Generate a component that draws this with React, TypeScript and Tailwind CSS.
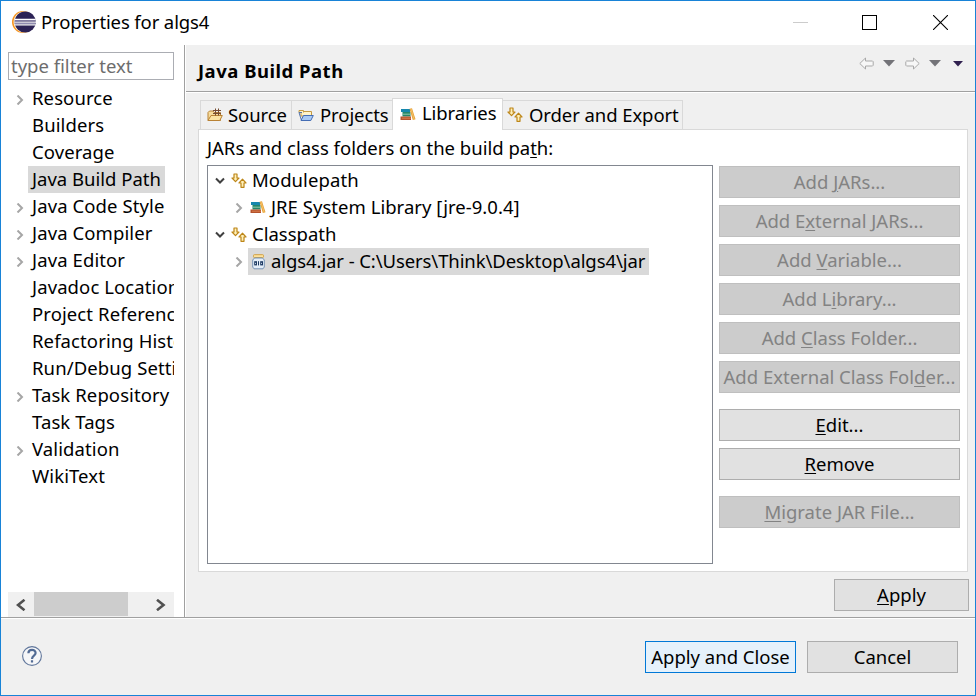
import React from "react";

type Item = { label: string; arrow?: boolean; selected?: boolean };

const categories: Item[] = [
  { label: "Resource", arrow: true },
  { label: "Builders" },
  { label: "Coverage" },
  { label: "Java Build Path", selected: true },
  { label: "Java Code Style", arrow: true },
  { label: "Java Compiler", arrow: true },
  { label: "Java Editor", arrow: true },
  { label: "Javadoc Location" },
  { label: "Project References" },
  { label: "Refactoring History" },
  { label: "Run/Debug Settings" },
  { label: "Task Repository", arrow: true },
  { label: "Task Tags" },
  { label: "Validation", arrow: true },
  { label: "WikiText" },
];

function Chevron({ open = false }: { open?: boolean }) {
  return open ? (
    <svg width="10" height="8" viewBox="0 0 10 8" fill="none" stroke="#404040" strokeWidth="2">
      <path d="M1 1.5 5 5.5 9 1.5" />
    </svg>
  ) : (
    <svg width="8" height="10" viewBox="0 0 8 10" fill="none" stroke="#a6a6a6" strokeWidth="2">
      <path d="M1.5 .5 6 5 1.5 9.5" />
    </svg>
  );
}

function EclipseLogo() {
  return (
    <svg width="24" height="22" viewBox="0 0 24 22">
      <circle cx="11" cy="11" r="11" fill="#f7941e" />
      <circle cx="12.2" cy="11" r="10.6" fill="#fff3df" />
      <circle cx="13.2" cy="11" r="10.6" fill="#2c2255" />
      <path d="M3 8.5H23.6M2.5 11.2H24M3 13.9H23.6" stroke="#fff" strokeWidth="1.3" />
      <path d="M3 9.8H23.6M3 12.5H23.6" stroke="#8f8bb0" strokeWidth="1" />
    </svg>
  );
}

function SourceIcon() {
  return (
    <svg width="16" height="14" viewBox="0 0 16 14">
      <path d="M1 12.5V4.5L2.5 3H6L7 4.5H13.5V12.5Z" fill="#f6dc9c" stroke="#b98235" />
      <path d="M1 12.5 4 7.5H15.3L12.8 12.5Z" fill="#fbe3a2" stroke="#b98235" />
      <path d="M6 2.5H14M6 5.5H14M8.5 0.5V7.5M11.5 0.5V7.5" stroke="#754c32" />
    </svg>
  );
}

function ProjectsIcon() {
  return (
    <svg width="16" height="14" viewBox="0 0 16 14">
      <path d="M1 4.5V2.5H5.5V4.5M5.5 3.5H13.5V8H3V4.5" fill="#fff4ca" stroke="#c49a42" />
      <path d="M1 4.5 3.5 12.5M1 4.5H4" stroke="#5473a8" fill="none" />
      <path d="M3 12.5 5.5 7.5H15.3L12.8 12.5Z" fill="#a8c9f4" stroke="#456db4" />
    </svg>
  );
}

function BooksIcon() {
  return (
    <svg width="16" height="13" viewBox="0 0 16 13">
      <rect x="1" y="1" width="9" height="3" fill="#1687ad" />
      <rect x="2.5" y="4" width="8" height="4.5" fill="#24866a" />
      <path d="M3 6.2H10" stroke="#91c9a9" />
      <rect x="0.5" y="8.5" width="10.5" height="3.5" fill="#b4532c" />
      <path d="M2 10.2H11" stroke="#d97f4f" />
      <path d="M9.5 0.8 12 0.3 15.5 11.3 12.8 12Z" fill="#e7a23b" />
      <path d="M11 1 14.2 11.5" stroke="#f8ca72" strokeWidth=".8" />
    </svg>
  );
}

function OrderIcon() {
  return (
    <svg width="16" height="16" viewBox="0 0 16 16" fill="#fff0b9" stroke="#bd8618" strokeWidth="1.2" strokeLinejoin="round">
      <path d="M3 1H6V5H8L4.5 8.7 1 5H3Z" />
      <path d="M11.5 6.2 15 10H13V14.3H10V10H8Z" />
    </svg>
  );
}

function JarIcon() {
  return (
    <svg width="13" height="16" viewBox="0 0 13 16">
      <rect x="1.5" y=".7" width="10" height="2.8" rx=".8" fill="#ffe29b" stroke="#d0a143" />
      <path d="M2.5 4H10.5L12.3 6V13L11 14.8H2L.7 13V6Z" fill="#e3edf8" stroke="#7894b5" />
      <rect x="2.7" y="7.7" width="1.8" height="3.2" fill="none" stroke="#1d3a63" />
      <path d="M6.5 7.2V11.4" stroke="#1d3a63" />
      <rect x="8.7" y="7.7" width="1.8" height="3.2" fill="none" stroke="#1d3a63" />
    </svg>
  );
}

function NavArrow({ flip = false }: { flip?: boolean }) {
  return (
    <svg width="15" height="13" viewBox="0 0 15 13" className={flip ? "-scale-x-100" : ""}>
      <path d="M.8 6.5 6.5 1V4H13.5L14.2 4.7V8.3L13.5 9H6.5V12Z" fill="#f7f7f7" stroke="#a9a9a9" strokeLinejoin="round" />
    </svg>
  );
}

function Caret({ small = false }: { small?: boolean }) {
  return small ? (
    <svg width="10" height="6" viewBox="0 0 10 6"><path d="M0 0H10L5 5.5Z" fill="#30204f" /></svg>
  ) : (
    <svg width="12" height="7" viewBox="0 0 12 7"><path d="M0 0H12L6 6.5Z" fill="#737378" /></svg>
  );
}

/* Dialog button; `hot` is the underlined mnemonic letter between `pre` and `post`. */
function Btn({ pre = "", hot = "", post, kind = "normal", className = "" }: {
  pre?: string; hot?: string; post: string; kind?: "normal" | "disabled" | "primary"; className?: string;
}) {
  const look = {
    normal: "border-[#adadad] bg-[#e1e1e1] text-black",
    disabled: "border-[#bfbfbf] bg-[#cccccc] text-[#838383]",
    primary: "border-[#0078d7] bg-[#e5f1fb] text-black",
  }[kind];
  return (
    <button className={`flex h-8 shrink-0 items-center justify-center border pb-px whitespace-pre ${look} ${className}`}>
      <span>{pre}<u className="decoration-1 underline-offset-2">{hot}</u>{post}</span>
    </button>
  );
}

export default function App() {
  return (
    <div className="flex h-[696px] w-[976px] flex-col overflow-hidden border border-[#1883d7] bg-[#f0f0f0] font-['Noto_Sans',sans-serif] text-[18.5px] leading-[27px] text-black">
      <header className="flex h-11 shrink-0 items-center bg-white pl-[11px]">
        <span className="pb-0.5"><EclipseLogo /></span>
        <span className="ml-[5px] pb-[3px] tracking-[-0.12px] whitespace-pre">Properties for algs4</span>
        <div className="ml-auto flex items-center pr-[27px] pb-px">
          <div className="h-px w-[15px] bg-[#cccccc]" />
          <div className="ml-[54px] size-[15px] border border-black" />
          <svg className="ml-[56px]" width="15" height="15" viewBox="0 0 15 15" stroke="#000" strokeWidth="1.1"><path d="M0 0 15 15M15 0 0 15" /></svg>
        </div>
      </header>

      <main className="flex h-[572px] shrink-0">
        <aside className="flex w-[183px] shrink-0 flex-col bg-white pt-[7px] pr-[10px] pl-[7px]">
          <div className="h-7 shrink-0 border border-[#abadb3] pl-0.5 leading-[25px] text-[#6d6d6d]">type filter text</div>
          <ul className="mt-[5px] overflow-hidden">
            {categories.map((c) => (
              <li key={c.label} className="flex h-[27px] items-center whitespace-pre">
                <span className="flex w-5 shrink-0 justify-center pt-0.5 pl-1"> {c.arrow && <Chevron />}</span>
                <span className={`h-[27px] shrink-0 px-1 leading-[25px] ${c.selected ? "bg-[#d9d9d9]" : "tracking-[0.1px]"}`}>{c.label}</span>
              </li>
            ))}
          </ul>
          <div className="mt-auto flex h-[25px] items-center bg-[#f0f0f0]">
            <svg className="ml-2" width="10" height="12" viewBox="0 0 10 12" fill="none" stroke="#505050" strokeWidth="2.6"><path d="M8.5 .8 2 6 8.5 11.2" /></svg>
            <div className="mb-px ml-2 h-6 w-[94px] bg-[#cdcdcd]" />
            <svg className="ml-7" width="10" height="12" viewBox="0 0 10 12" fill="none" stroke="#505050" strokeWidth="2.6"><path d="M1 .8 7.5 6 1 11.2" /></svg>
          </div>
        </aside>
        <div className="w-0.5 shrink-0 border-l border-[#a0a0a0] bg-white" />

        <section className="flex flex-1 flex-col">
          <div className="flex h-[47px] shrink-0 items-start border-b border-b-[#a0a0a0] pr-3">
            <h1 className="mt-3 ml-3 font-bold tracking-[0.5px] whitespace-pre">Java Build Path</h1>
            <div className="mt-3 ml-auto flex h-[13px] items-center">
              <NavArrow />
              <span className="ml-[9px]"><Caret /></span>
              <span className="ml-[10px]"><NavArrow flip /></span>
              <span className="ml-[9px]"><Caret /></span>
              <span className="ml-3"><Caret small /></span>
            </div>
          </div>
          <div className="h-px shrink-0 bg-white" />

          <nav className="mt-[5px] ml-[14px] flex h-8 shrink-0 items-end tracking-[-0.08px] whitespace-pre">
            <div className="mb-px flex h-[29px] w-[92px] items-center border border-b-0 border-[#d9d9d9] pl-1.5">
              <SourceIcon /><span className="ml-[5px] pb-0.5">Source</span>
            </div>
            <div className="mb-px flex h-[29px] w-[100px] items-center border-t border-[#d9d9d9] pl-1.5">
              <ProjectsIcon /><span className="ml-[6px] pb-0.5">Projects</span>
            </div>
            <div className="relative z-10 flex h-8 w-[111px] items-center border border-b-0 border-[#d9d9d9] bg-white pl-[7px]">
              <BooksIcon /><span className="ml-1.5 pb-1">Libraries</span>
            </div>
            <div className="mb-px flex h-[29px] w-[180px] items-center border-t border-r border-[#d9d9d9] pl-[4px]">
              <OrderIcon /><span className="ml-[6px] pb-0.5">Order and Export</span>
            </div>
          </nav>

          <div className="-mt-px ml-3 flex h-[443px] w-[770px] shrink-0 border border-[#d9d9d9] bg-white pl-2">
            <div className="w-[506px] shrink-0">
              <p className="mt-[5px] h-[30px] leading-[25px] whitespace-pre">JARs and class folders on the build pa<u className="decoration-1 underline-offset-2">t</u>h:</p>
              <div className="h-[399px] border border-[#828790] whitespace-pre">
                <div className="mt-px flex h-[27px] items-center pl-[7px]">
                  <Chevron open /><span className="ml-1.5"><OrderIcon /></span><span className="ml-[5px] pb-0.5 tracking-[0.08px]">Modulepath</span>
                </div>
                <div className="flex h-[27px] items-center pl-[27px]">
                  <Chevron /><span className="ml-[7px]"><BooksIcon /></span><span className="ml-[5px] pb-0.5 tracking-[0.03px]">JRE System Library [jre-9.0.4]</span>
                </div>
                <div className="flex h-[27px] items-center pl-[7px]">
                  <Chevron open /><span className="ml-1.5"><OrderIcon /></span><span className="ml-[5px] pb-0.5">Classpath</span>
                </div>
                <div className="flex h-[27px] items-center pl-[27px]">
                  <Chevron />
                  <div className="ml-[5px] flex h-[27px] w-[401px] items-center bg-[#d9d9d9] pl-1">
                    <JarIcon /><span className="ml-1.5 pb-0.5 tracking-[-0.09px]">algs4.jar - C:\Users\Think\Desktop\algs4\jar</span>
                  </div>
                </div>
              </div>
            </div>
            <div className="ml-[6px] flex w-[241px] flex-col gap-[7px] pt-9">
              <Btn kind="disabled" pre="Add " hot="J" post="ARs..." />
              <Btn kind="disabled" pre="Add E" hot="x" post="ternal JARs..." />
              <Btn kind="disabled" pre="Add " hot="V" post="ariable..." />
              <Btn kind="disabled" pre="Add L" hot="i" post="brary..." />
              <Btn kind="disabled" pre="Add " hot="C" post="lass Folder..." />
              <Btn kind="disabled" pre="Add External Class Fol" hot="d" post="er..." />
              <Btn className="mt-[9px]" hot="E" post="dit..." />
              <Btn hot="R" post="emove" />
              <Btn className="mt-[9px]" kind="disabled" hot="M" post="igrate JAR File..." />
            </div>
          </div>
          <div className="mt-[7px] flex justify-end pr-1.5">
            <Btn className="w-[135px]" hot="A" post="pply" />
          </div>
        </section>
      </main>

      <footer className="flex h-[78px] shrink-0 items-start border-t border-[#a0a0a0]">
        <div className="flex h-full w-full items-start border-t border-white pr-[17px] pl-[21px]">
          <svg className="mt-[27px]" width="20" height="20" viewBox="0 0 20 20">
            <circle cx="10" cy="10" r="9.4" fill="#f5f6f8" stroke="#60769b" strokeWidth="1.1" />
            <path d="M6.4 7.2C6.4 2.8 13.6 2.8 13.6 7C13.6 9.8 10 9.5 10 13M10 14.3V16.5" fill="none" stroke="#526b94" strokeWidth="2.2" />
          </svg>
          <Btn className="mt-[22px] ml-auto w-[151px]" kind="primary" post="Apply and Close" />
          <Btn className="mt-[22px] ml-[11px] w-[151px]" post="Cancel" />
        </div>
      </footer>
    </div>
  );
}
